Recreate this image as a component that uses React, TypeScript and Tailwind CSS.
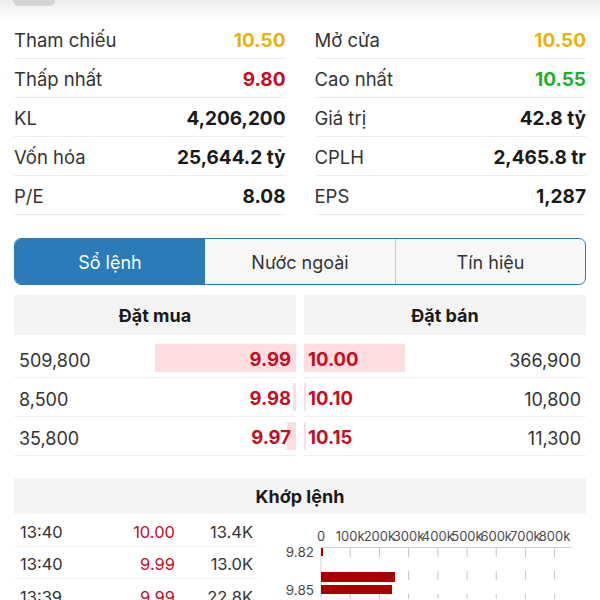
import React from "react";

const stats = [
  [
    { label: "Tham chiếu", value: "10.50", color: "text-[#e8b40c]" },
    { label: "Mở cửa", value: "10.50", color: "text-[#e8b40c]" },
  ],
  [
    { label: "Thấp nhất", value: "9.80", color: "text-[#c40d1e]" },
    { label: "Cao nhất", value: "10.55", color: "text-[#1fae2c]" },
  ],
  [
    { label: "KL", value: "4,206,200", color: "text-[#1a1a1a]" },
    { label: "Giá trị", value: "42.8 tỷ", color: "text-[#1a1a1a]" },
  ],
  [
    { label: "Vốn hóa", value: "25,644.2 tỷ", color: "text-[#1a1a1a]" },
    { label: "CPLH", value: "2,465.8 tr", color: "text-[#1a1a1a]" },
  ],
  [
    { label: "P/E", value: "8.08", color: "text-[#1a1a1a]" },
    { label: "EPS", value: "1,287", color: "text-[#1a1a1a]" },
  ],
];

const bids = [
  { vol: "509,800", price: "9.99", bar: 141 },
  { vol: "8,500", price: "9.98", bar: 3 },
  { vol: "35,800", price: "9.97", bar: 9 },
];

const asks = [
  { vol: "366,900", price: "10.00", bar: 101 },
  { vol: "10,800", price: "10.10", bar: 2 },
  { vol: "11,300", price: "10.15", bar: 2 },
];

const matches = [
  { time: "13:40", price: "10.00", vol: "13.4K" },
  { time: "13:40", price: "9.99", vol: "13.0K" },
  { time: "13:39", price: "9.99", vol: "22.8K" },
];

const ticks = ["0", "100k", "200k", "300k", "400k", "500k", "600k", "700k", "800k"];

const MatchChart = () => {
  // svg sits at page x 258, y 515; axis origin at page x 321
  const x0 = 63;
  const step = 29.2;
  return (
    <svg width="327" height="85" viewBox="0 0 327 85" className="block">
      {ticks.map((t, i) => (
        <text
          key={t}
          x={x0 + i * step}
          y={27}
          textAnchor="middle"
          fontSize="13"
          fill="#4a4a4a"
          fontFamily="Inter, sans-serif"
        >
          {t}
        </text>
      ))}
      <line x1={x0} y1={33.5} x2={314} y2={33.5} stroke="#cfcfcf" strokeWidth="1" />
      {ticks.map((t, i) =>
        i === 0 ? null : (
          <line
            key={"g" + t}
            x1={x0 + i * step}
            y1={34}
            x2={x0 + i * step}
            y2={85}
            stroke="#c4c4c4"
            strokeWidth="1"
            strokeDasharray="9 14"
          />
        )
      )}
      <line x1={x0} y1={33.5} x2={x0} y2={85} stroke="#cfcfcf" strokeWidth="1" />
      <text x={56} y={43} textAnchor="end" fontSize="13.5" fill="#4a4a4a" fontFamily="Inter, sans-serif">
        9.82
      </text>
      <text x={56} y={81} textAnchor="end" fontSize="13.5" fill="#4a4a4a" fontFamily="Inter, sans-serif">
        9.85
      </text>
      <rect x={x0} y={34} width={2} height={8} fill="#a40000" />
      <rect x={x0} y={58} width={74} height={10} fill="#a40000" />
      <rect x={x0} y={71} width={71} height={9} fill="#a40000" />
    </svg>
  );
};

const App = () => {
  return (
    <div className="w-[600px] h-[600px] overflow-hidden bg-white font-['Inter','Liberation_Sans',sans-serif] text-[#333]">
      {/* cut-off card above */}
      <div className="h-[20px] bg-gradient-to-b from-[#ececec] to-white px-[13px]">
        <div className="w-[42px] h-[6px] rounded-b-[6px] bg-[#d4d4d4]" />
      </div>

      {/* stats */}
      <div className="grid grid-cols-2 gap-x-[29px] px-[14px]">
        {stats.map((row, i) =>
          row.map((s) => (
            <div
              key={s.label + i}
              className="h-[39px] pt-[4px] flex items-center justify-between border-b border-[#ececec]"
            >
              <span className="text-[18.5px] text-[#333]">{s.label}</span>
              <span className={`text-[19px] font-bold ${s.color}`}>{s.value}</span>
            </div>
          ))
        )}
      </div>

      {/* tabs */}
      <div className="mx-[14px] mt-[23px] h-[47px] grid grid-cols-3 border border-[#2b7bb9] rounded-[7px] overflow-hidden bg-[#f8f8f8] text-[18px]">
        <div className="bg-[#2b7bb9] text-white flex items-center justify-center pt-[2px]">Sổ lệnh</div>
        <div className="flex items-center justify-center text-[#333] pt-[2px]">Nước ngoài</div>
        <div className="flex items-center justify-center text-[#333] border-l border-[#c9c9c9] pt-[2px]">Tín hiệu</div>
      </div>

      {/* order book */}
      <div className="mx-[14px] mt-[10px] grid grid-cols-2 gap-x-[8px]">
        <div>
          <div className="h-[40px] bg-[#f4f4f4] flex items-center justify-center text-[18px] font-bold text-[#1a1a1a]">
            Đặt mua
          </div>
          <div className="mt-[4px]">
            {bids.map((b) => (
              <div key={b.price} className="relative h-[39px] pt-[4px] flex items-center justify-between border-b border-[#efefef] px-[5px]">
                <div className="absolute right-0 top-[5px] bottom-[5px] bg-[#fddde0]" style={{ width: b.bar }} />
                <span className="relative text-[18px] text-[#333]">{b.vol}</span>
                <span className="relative text-[18.5px] font-bold text-[#c40d1e]">{b.price}</span>
              </div>
            ))}
          </div>
        </div>
        <div>
          <div className="h-[40px] bg-[#f4f4f4] flex items-center justify-center text-[18px] font-bold text-[#1a1a1a]">
            Đặt bán
          </div>
          <div className="mt-[4px]">
            {asks.map((a) => (
              <div key={a.price} className="relative h-[39px] pt-[4px] flex items-center justify-between border-b border-[#efefef] pl-[4px] pr-[5px]">
                <div className="absolute left-0 top-[5px] bottom-[5px] bg-[#fddde0]" style={{ width: a.bar }} />
                <span className="relative text-[18.5px] font-bold text-[#c40d1e]">{a.price}</span>
                <span className="relative text-[18px] text-[#333]">{a.vol}</span>
              </div>
            ))}
          </div>
        </div>
      </div>

      {/* matched orders */}
      <div className="mx-[14px] mt-[22px] h-[36px] bg-[#f4f4f4] flex items-center justify-center text-[18px] font-bold text-[#1a1a1a]">
        Khớp lệnh
      </div>
      <div className="flex">
        <div className="ml-[14px] w-[244px]">
          {matches.map((m, i) => (
            <div key={i} className="h-[32.5px] pt-[5px] flex items-center border-b border-[#efefef] pl-[6px] pr-[5px] text-[16.5px]">
              <span className="w-[100px] text-[#333]">{m.time}</span>
              <span className="w-[55px] text-right text-[#c40d1e]">{m.price}</span>
              <span className="w-[78px] text-right text-[#333]">{m.vol}</span>
            </div>
          ))}
        </div>
        <MatchChart />
      </div>
    </div>
  );
};

export default App;
